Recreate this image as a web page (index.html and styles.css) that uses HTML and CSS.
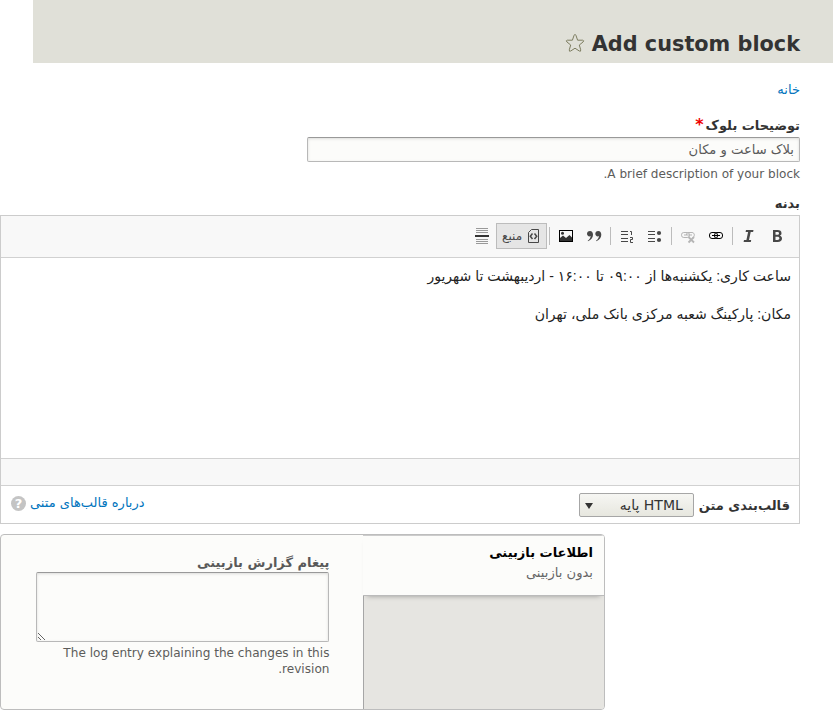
FILE: index.html
```html
<!DOCTYPE html>
<html lang="fa" dir="rtl">
<head>
<meta charset="utf-8">
<title>Add custom block</title>
<link rel="stylesheet" href="styles.css">
</head>
<body>
<header class="page-header">
  <h1>Add custom block</h1>
  <svg class="star" width="20" height="20" viewBox="0 0 20 20"><path d="M10 1.5 Q10.7 1.5 11 2.5 L12.6 7.2 H17.6 Q19.6 7.5 18 9 L14.3 12 L15.7 16.8 Q16 19 14.3 18 L10 15.2 L5.7 18 Q4 19 4.3 16.8 L5.7 12 L2 9 Q.4 7.5 2.4 7.2 H7.4 L9 2.5 Q9.3 1.5 10 1.5Z"/></svg>
</header>
<main>
  <nav class="breadcrumb"><a>خانه</a></nav>
  <label class="label first-label"><span>توضیحات بلوک</span><span class="required">*</span></label>
  <input class="text-input" type="text" value="بلاک ساعت و مکان">
  <p class="description">A brief description of your block.</p>
  <label class="label body-label">بدنه</label>
  <section class="editor">
    <div class="toolbar">
      <span class="tool"><svg width="16" height="16" viewBox="0 0 16 16"><path fill="#484848" fill-rule="evenodd" d="M4 2h4.500c2.600 0 4 1.100 4 3.200 0 1.300-.6 2.100-1.700 2.500 1.400.3 2.200 1.300 2.200 2.800 0 2.300-1.600 3.500-4.300 3.500H4zm2.500 2v2.800h1.700c1.200 0 1.800-.5 1.800-1.400S9.400 4 8.200 4zm0 4.700V12h1.900c1.300 0 2-.6 2-1.700s-.7-1.600-2-1.600z"/></svg></span>
      <span class="tool"><svg width="16" height="16" viewBox="0 0 16 16"><path fill="#484848" d="M5 2h7.500l-.4 2h-2.400L8 12h2.200l-.4 2H2.600l.4-2h2.400l1.700-8H4.600z"/></svg></span>
      <i class="sep"></i>
      <span class="tool"><svg width="16" height="16" viewBox="0 0 16 16" fill="none" stroke="#000"><rect x="1.500" y="4.500" width="8" height="6" rx="2.500"/><rect x="6.500" y="4.500" width="8" height="6" rx="2.500"/><path d="M4 7.500h8"/></svg></span>
      <span class="tool"><svg width="16" height="16" viewBox="0 0 16 16" fill="none" stroke="#b5b5b5"><rect x="1.500" y="4.500" width="8" height="5" rx="2.300"/><path d="M6.500 7c0-2 1-2.500 2.500-2.500h3c3 0 3 4.500.5 5M4 7h8"/><path stroke-width="1.800" d="m8.500 9 5.500 5.500M14 9l-5.500 5.500"/></svg></span>
      <i class="sep"></i>
      <span class="tool"><svg width="16" height="16" viewBox="0 0 16 16" fill="#484848"><path d="M1 3h7v1H1zm0 3h7v1H1zm0 4h7v1H1zm0 3h7v1H1z"/><circle cx="12" cy="5" r="2.100"/><circle cx="12" cy="12" r="2.100"/></svg></span>
      <span class="tool"><svg width="16" height="16" viewBox="0 0 16 16" fill="#484848"><path d="M2 3h7v1H2zm0 3h7v1H2zm0 4h7v1H2zm0 3h7v1H2z"/><path fill="none" stroke="#484848" d="M11 3.500h1.500V7M11 9.500h2.500v2h-2v3H14"/></svg></span>
      <i class="sep"></i>
      <span class="tool"><svg width="16" height="16" viewBox="0 0 16 16" fill="#484848"><path id="q" d="M4 3C2 3 1 4.300 1 5.800s1 2.600 2.500 2.600L4.600 8c0 1.800-1 3.400-2.900 4.700l.3.600C5.300 11.800 7 9.400 7 6.700 7 4.500 5.900 3 4 3z"/><use href="#q" x="8.300"/></svg></span>
      <span class="tool"><svg width="16" height="16" viewBox="0 0 16 16"><path fill="#000" fill-rule="evenodd" d="M1 2h14v12H1zm1 1v10h12V3z"/><path fill="#333" d="M2 12v-2l3-2.500L8 10l3.500-3L14 9.500V13H2z"/><circle cx="4.500" cy="5.300" r="1.500" fill="#333"/></svg></span>
      <i class="sep"></i>
      <span class="tool source"><svg width="16" height="16" viewBox="0 0 16 16" fill="none" stroke="#484848"><path d="M6.500 1.500h7v13h-10v-10z"/><path stroke-width="1.500" d="M7.500 5.500 5.300 8.200l2.200 2.800m2-5.500 2.200 2.700L9.500 11"/></svg><span>منبع</span></span>
      <span class="tool"><svg width="16" height="16" viewBox="0 0 16 16"><path fill="#999" d="M2 0h12v1H2zm0 2h12v1H2zm0 2h12v1H2zm0 7h12v1H2zm0 2h12v1H2zm0 2h12v1H2z"/><path fill="#333" d="M1 7h14v2H1z"/></svg></span>
    </div>
    <div class="content">
      <p>ساعت کاری: یکشنبه‌ها از ۰۹:۰۰ تا ۱۶:۰۰ - اردیبهشت تا شهریور</p>
      <p>مکان: پارکینگ شعبه مرکزی بانک ملی، تهران</p>
    </div>
    <div class="status-bar"></div>
    <div class="format-row">
      <strong>قالب‌بندی متن</strong>
      <div class="select"><span>HTML پایه</span><i class="arrow"></i></div>
      <a class="help">درباره قالب‌های متنی</a>
      <span class="help-icon">?</span>
    </div>
  </section>
  <section class="tabs">
    <div class="tab-menu">
      <div class="tab"><strong>اطلاعات بازبینی</strong><span>بدون بازبینی</span></div>
    </div>
    <div class="tab-pane">
      <label class="log-label">پیغام گزارش بازبینی</label>
      <textarea class="log"></textarea>
      <p class="description">The log entry explaining the changes in this revision.</p>
    </div>
  </section>
</main>
</body>
</html>
```
FILE: styles.css
```css
* { box-sizing: border-box; }
html { overflow: hidden; }
body { margin: 0; height: 710px; overflow: hidden; background: #fff; color: #333; font: 13px/20px "DejaVu Sans", sans-serif; }
p { margin: 0; }
a { color: #0074bd; }
.page-header { display: flex; width: 800px; height: 63px; padding: 30px 33px 0 0; background: #e0e0d8; }
h1 { margin: 0; font-size: 20.8px; line-height: 28px; }
.star { margin: 3px 7px 0 0; fill: none; stroke: #7d7d60; stroke-width: 1; }
main { width: 800px; margin-right: 33px; }
.breadcrumb { height: 53px; padding-top: 17px; font-size: 13.1px; }
.label { display: block; height: 21px; font-weight: bold; }
.first-label { display: flex; }
.required { margin-right: 2px; color: #e00; font-size: 16px; line-height: 18px; }
.text-input { display: block; width: 493px; height: 25px; padding: 0 5px; border: 1px solid #b8b8b8; border-top-color: #999; border-radius: 2px; background: #fcfcfa; box-shadow: inset 0 1px 3px rgba(0,0,0,.13); color: #595959; font: 13.1px "DejaVu Sans", sans-serif; outline: 0; }
.description { color: #5c5c5b; font-size: 12.05px; line-height: 16px; }
main > .description { margin-top: 4px; }
.body-label { margin-top: 12px; }
.editor { height: 309px; border: 1px solid #ccc; }
.toolbar { display: flex; align-items: center; height: 42px; padding: 0 8px 2px; border-bottom: 1px solid #d1d1d1; background: #f8f8f8; }
.tool { display: flex; align-items: center; justify-content: center; width: 28px; height: 26px; flex: none; }
.sep { width: 1px; height: 18px; margin: 0 2px; background: #bcbcbc; }
.source { width: 51px; margin-right: 0; padding: 0 5px; justify-content: space-between; border: 1px solid #bcbcbc; background: #e5e5e5; color: #484848; font-size: 12px; }
.content { height: 200px; padding: 7px 8px; color: #222; font: 14.05px/22px "Liberation Sans", "DejaVu Sans", sans-serif; }
.content p { margin-bottom: 16px; }
.status-bar { height: 28px; border: solid #d1d1d1; border-width: 1px 0; background: #f8f8f8; }
.format-row { display: flex; align-items: flex-start; padding: 7px 9px 0; }
.format-row strong { padding-top: 3px; }
.select { display: flex; align-items: center; justify-content: space-between; width: 115px; height: 24px; margin-right: 5px; padding: 0 10px 0 5px; border: 1px solid #a6a6a6; border-radius: 2px; background: linear-gradient(#f6f6f3, #e7e7df); font-size: 14px; }
.arrow { margin-top: 1px; border: 4.5px solid transparent; border-top: 6px solid #333; border-bottom: 0; }
.help { margin-right: auto; }
.help-icon { width: 15px; height: 15px; margin: 3px 4px 0 1px; border-radius: 50%; background: #c4c4c4; color: #fff; font: bold 13px/15px "DejaVu Sans", sans-serif; text-align: center; }
.tabs { display: flex; width: 605px; height: 176px; margin: 10px auto 0 0; border: 1px solid #bdbdbd; border-radius: 4px; background: #fcfcfa; overflow: hidden; }
.tab-menu { width: 241px; border-left: 1px solid #a6a6a6; background: #e6e5e1; }
.tab { display: flex; flex-direction: column; height: 61px; margin-left: -1px; padding: 7px 11px 0 0; border-top: 1px solid #ccc; border-bottom: 1px solid #bbb; background: #fcfcfa; box-shadow: 0 4px 5px -4px rgba(0,0,0,.35); }
.tab strong { color: #000; }
.tab span { color: #666; font-size: 13.1px; }
.tab-pane { width: 363px; padding: 18px 34px 0 35px; }
.log-label { display: block; height: 19px; color: #595959; font-weight: bold; }
.log { display: block; width: 293px; height: 70px; border: 1px solid #b8b8b8; border-top-color: #999; border-radius: 2px; background: #fcfcfa; box-shadow: inset 0 1px 3px rgba(0,0,0,.13); outline: 0; resize: vertical; }
.tab-pane .description { margin-top: 3px; font-size: 12.1px; }
```
